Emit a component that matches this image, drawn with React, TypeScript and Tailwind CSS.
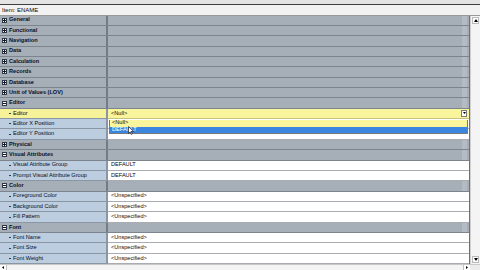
import React from 'react';

type Row =
  | { kind: 'cat'; label: string; open?: boolean }
  | { kind: 'prop'; label: string; value?: string; selected?: boolean };

const ROWS: Row[] = [
  { kind: 'cat', label: 'General' },
  { kind: 'cat', label: 'Functional' },
  { kind: 'cat', label: 'Navigation' },
  { kind: 'cat', label: 'Data' },
  { kind: 'cat', label: 'Calculation' },
  { kind: 'cat', label: 'Records' },
  { kind: 'cat', label: 'Database' },
  { kind: 'cat', label: 'Unit of Values (LOV)' },
  { kind: 'cat', label: 'Editor', open: true },
  { kind: 'prop', label: 'Editor', value: '<Null>', selected: true },
  { kind: 'prop', label: 'Editor X Position', value: '' },
  { kind: 'prop', label: 'Editor Y Position', value: '' },
  { kind: 'cat', label: 'Physical' },
  { kind: 'cat', label: 'Visual Attributes', open: true },
  { kind: 'prop', label: 'Visual Attribute Group', value: 'DEFAULT' },
  { kind: 'prop', label: 'Prompt Visual Attribute Group', value: 'DEFAULT' },
  { kind: 'cat', label: 'Color', open: true },
  { kind: 'prop', label: 'Foreground Color', value: '<Unspecified>' },
  { kind: 'prop', label: 'Background Color', value: '<Unspecified>' },
  { kind: 'prop', label: 'Fill Pattern', value: '<Unspecified>' },
  { kind: 'cat', label: 'Font', open: true },
  { kind: 'prop', label: 'Font Name', value: '<Unspecified>' },
  { kind: 'prop', label: 'Font Size', value: '<Unspecified>' },
  { kind: 'prop', label: 'Font Weight', value: '<Unspecified>' },
];

function Toggle({ open }: { open?: boolean }) {
  return (
    <span className="flex h-[5px] w-[5px] shrink-0 items-center justify-center border border-[#303848] bg-white">
      <svg width="3" height="3" viewBox="0 0 3 3">
        <rect x="0" y="1" width="3" height="1" fill="#101828" />
        {!open && <rect x="1" y="0" width="1" height="3" fill="#101828" />}
      </svg>
    </span>
  );
}

function CatRow({ row }: { row: Extract<Row, { kind: 'cat' }> }) {
  return (
    <div className="flex h-[10.36px] border-b border-[#7c848d] bg-[#a6aeb7]">
      <div className="flex w-[108px] shrink-0 items-center gap-[2px] pl-[2px] border-r-2 border-[#737b84]">
        <Toggle open={row.open} />
        <span className="font-bold text-[#0a1028]">{row.label}</span>
      </div>
      <div className="flex flex-1 justify-end pr-[2px]">
        <div className="w-[5px] bg-[#b4bbc2]" />
      </div>
    </div>
  );
}

function PropRow({ row }: { row: Extract<Row, { kind: 'prop' }> }) {
  const sel = row.selected;
  return (
    <div className="flex h-[10.36px]">
      <div
        className={`flex w-[108px] shrink-0 items-center pl-[9px] border-b border-r-2 border-[#8b96a4] ${
          sel ? 'bg-[#f6f29a]' : 'bg-[#bccde0]'
        }`}
      >
        <span className="mr-[2px] h-[1px] w-[2px] bg-[#303a50]" />
        <span className="text-[#060c20]">{row.label}</span>
      </div>
      <div
        className={`flex flex-1 items-center pl-[3px] border-b ${
          sel ? 'border-[#c8c27a] bg-[#f8f59c]' : 'border-[#a9acb0] bg-white'
        }`}
      >
        <span className="flex-1 text-[#080808]">{row.value}</span>
        {sel && (
          <span className="mr-[2px] flex h-[7px] w-[6px] items-center justify-center border border-[#7a7a7a] bg-white">
            <svg width="3" height="2" viewBox="0 0 3 2">
              <path d="M0 0h3L1.5 2z" fill="#000" />
            </svg>
          </span>
        )}
      </div>
    </div>
  );
}

function Cursor() {
  return (
    <svg width="6" height="9" viewBox="0 0 6 9" className="absolute left-[128px] top-[126px]">
      <path d="M0.5 0.5v7l1.7-1.6 1.2 2.6 1-0.5-1.2-2.5h2.3z" fill="#fff" stroke="#000" strokeWidth="0.6" />
    </svg>
  );
}

export default function App() {
  return (
    <div
      className="relative h-[270px] w-[480px] overflow-hidden bg-[#f0f0f0] text-[5.6px] leading-none"
      style={{ fontFamily: '"Liberation Sans", Arial, sans-serif' }}
    >
      <div className="h-[4.5px] border-b border-[#404040] bg-[#e4e4e4]" />
      <div className="flex h-[11px] items-center border-b border-[#9a9a9a] bg-[#f2f2f2] pl-[2px] text-[6px] text-[#080808]">
        Item: ENAME
      </div>
      <div className="flex h-[248.6px]">
        <div className="flex-1 overflow-hidden border-r border-[#6c737b]">
          {ROWS.map((r, i) =>
            r.kind === 'cat' ? <CatRow key={i} row={r} /> : <PropRow key={i} row={r} />,
          )}
        </div>
        <div className="flex w-[10px] flex-col border-l border-[#d0d0d0] bg-[#f4f4f4]">
          <div className="mx-[1px] mt-[1px] flex h-[7px] items-center justify-center border border-[#b8b8b8] bg-white">
            <svg width="4" height="3" viewBox="0 0 4 3">
              <path d="M0 3h4L2 0z" fill="#000" />
            </svg>
          </div>
          <div className="flex-1" />
          <div className="mx-[1px] mb-[1px] flex h-[7px] items-center justify-center border border-[#b8b8b8] bg-white">
            <svg width="4" height="3" viewBox="0 0 4 3">
              <path d="M0 0h4L2 3z" fill="#000" />
            </svg>
          </div>
        </div>
      </div>
      <div className="flex h-[6px] items-stretch border-t border-[#c8c8c8] bg-[#f4f4f4]">
        <div className="flex w-[7px] items-center justify-center border-r border-[#c0c0c0] bg-white">
          <svg width="2" height="3" viewBox="0 0 2 3">
            <path d="M2 0v3L0 1.5z" fill="#000" />
          </svg>
        </div>
        <div className="flex-1" />
        <div className="flex w-[7px] items-center justify-center border-l border-[#c0c0c0] bg-white">
          <svg width="2" height="3" viewBox="0 0 2 3">
            <path d="M0 0v3L2 1.5z" fill="#000" />
          </svg>
        </div>
        <div className="w-[10px] bg-[#ececec]" />
      </div>

      {/* open list of the Editor field */}
      <div className="absolute left-[109px] top-[119.5px] w-[359px] border-x border-b border-[#7a7a7a] bg-white">
        <div className="flex h-[7px] items-center bg-[#f8f59c] pl-[2px] text-[#080808]">&lt;Null&gt;</div>
        <div className="flex h-[6.5px] items-center bg-[#3a86de] pl-[2px] text-white">DEFAULT</div>
      </div>
      <Cursor />
    </div>
  );
}
